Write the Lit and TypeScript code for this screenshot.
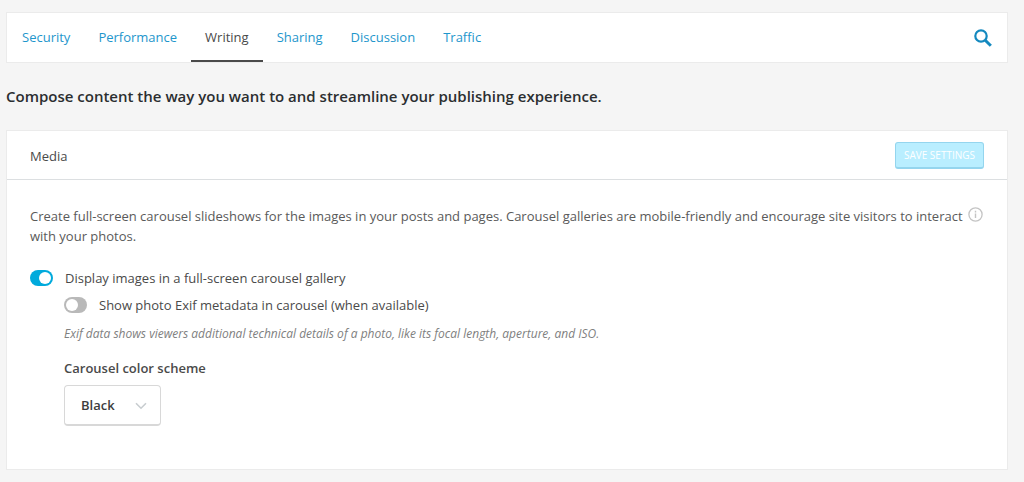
import { LitElement, html, css } from "lit";
import { customElement, state } from "lit/decorators.js";

const TABS = ["Security", "Performance", "Writing", "Sharing", "Discussion", "Traffic"];

@customElement("app-root")
export class AppRoot extends LitElement {
  @state() private active = "Writing";
  @state() private carousel = true;
  @state() private exif = false;

  static styles = css`
    :host {
      display: block;
      box-sizing: border-box;
      min-height: 100vh;
      padding: 12px 16px 12px 6px;
      background: #f5f5f5;
      color: #4a4a4a;
      font: 13px/20px "Open Sans", "Noto Sans", sans-serif;
    }
    *, *::before {
      box-sizing: border-box;
    }
    .nav, .card {
      background: #fff;
      border: 1px solid #ebebeb;
    }
    .nav {
      display: flex;
      align-items: stretch;
      height: 51px;
      padding: 0 15px 0 1px;
    }
    .tabs {
      display: flex;
      flex: 1;
    }
    .tab {
      display: flex;
      align-items: center;
      padding: 0 14px;
      border-bottom: 2px solid transparent;
      color: #1e96cc;
      text-decoration: none;
    }
    .tab.active {
      color: #4a4a4a;
      border-bottom-color: #4a4a4a;
    }
    .search {
      align-self: center;
      display: flex;
      padding: 0;
      border: 0;
      background: none;
      cursor: pointer;
    }
    .title {
      margin: 22px 0 23px;
      color: #2b2e30;
      font-size: 15px;
      line-height: 22px;
      font-weight: 600;
    }
    .card-head {
      display: flex;
      align-items: center;
      justify-content: space-between;
      height: 49px;
      padding: 0 23px;
      border-bottom: 1px solid #dcdfe1;
    }
    .card-title {
      margin: 0;
      padding-top: 2px;
      font-size: 13px;
      font-weight: 400;
    }
    .save {
      height: 27px;
      padding: 0 8px;
      border: 1px solid #94d5ee;
      border-bottom-width: 2px;
      border-radius: 3px;
      background: #b9eeff;
      color: #fff;
      font: 10px/20px "Open Sans", "Noto Sans", sans-serif;
      text-transform: uppercase;
    }
    .card-body {
      padding: 26px 23px 43px;
    }
    .intro {
      display: flex;
      align-items: flex-start;
      justify-content: space-between;
      margin-bottom: 22px;
    }
    .text {
      margin: 0;
      color: #5a5a5a;
    }
    .info {
      display: flex;
      flex: none;
      padding: 1px 1px 0 0;
      border: 0;
      background: none;
    }
    .row {
      display: flex;
      align-items: center;
      gap: 12px;
      height: 20px;
    }
    .toggle {
      appearance: none;
      flex: none;
      display: flex;
      width: 23px;
      height: 16px;
      margin: 0;
      padding: 2px;
      border-radius: 8px;
      background: #b9b9b9;
    }
    .toggle::before {
      content: "";
      width: 12px;
      height: 12px;
      border-radius: 50%;
      background: #fff;
    }
    .toggle:checked {
      justify-content: flex-end;
      background: #00aadc;
    }
    .nested {
      display: flex;
      flex-direction: column;
      align-items: flex-start;
      padding: 7px 0 0 34px;
    }
    .hint {
      margin: 9px 0 14px;
      color: #808080;
      font-size: 12px;
      font-style: italic;
    }
    .label {
      margin-bottom: 7px;
      font-weight: 600;
    }
    .picker {
      display: grid;
      align-items: center;
    }
    .picker > * {
      grid-area: 1 / 1;
    }
    .select {
      appearance: none;
      width: 97px;
      height: 41px;
      padding: 0 40px 0 16px;
      border: 1px solid #d8d8d8;
      border-bottom-width: 2px;
      border-radius: 4px;
      background: #fff;
      color: #3d3d3d;
      font: 600 13px/20px "Open Sans", "Noto Sans", sans-serif;
    }
    .chevron {
      justify-self: end;
      margin-right: 14px;
      pointer-events: none;
    }
  `;

  render() {
    return html`
      <nav class="nav">
        <div class="tabs">
          ${TABS.map(
            (t) => html`<a
              class="tab ${t === this.active ? "active" : ""}"
              href="#${t.toLowerCase()}"
              @click=${() => (this.active = t)}
              >${t}</a
            >`
          )}
        </div>
        <button class="search" aria-label="Search">
          <svg width="18" height="18" viewBox="0 0 18 18" fill="none" stroke="#1489bf">
            <circle cx="7" cy="7" r="5.7" stroke-width="2.2" />
            <path d="M11 11l5.8 5.8" stroke-width="3" />
          </svg>
        </button>
      </nav>
      <h1 class="title">Compose content the way you want to and streamline your publishing experience.</h1>
      <section class="card">
        <header class="card-head">
          <h2 class="card-title">Media</h2>
          <button class="save" disabled>Save settings</button>
        </header>
        <div class="card-body">
          <div class="intro">
            <p class="text">
              Create full-screen carousel slideshows for the images in your posts and pages. Carousel galleries are
              mobile-friendly and encourage site visitors to interact with your photos.
            </p>
            <button class="info" aria-label="Learn more">
              <svg width="15" height="15" viewBox="0 0 15 15" fill="none" stroke="#c4c4c4">
                <circle cx="7.5" cy="7.5" r="6.6" stroke-width="1.3" />
                <path d="M7.5 6.5v4.6M7.5 3.8v1.6" stroke-width="1.4" />
              </svg>
            </button>
          </div>
          <div class="row">
            <input
              class="toggle"
              type="checkbox"
              id="carousel"
              .checked=${this.carousel}
              @change=${() => (this.carousel = !this.carousel)}
            />
            <label for="carousel">Display images in a full-screen carousel gallery</label>
          </div>
          <div class="nested">
            <div class="row">
              <input
                class="toggle"
                type="checkbox"
                id="exif"
                .checked=${this.exif}
                @change=${() => (this.exif = !this.exif)}
              />
              <label for="exif">Show photo Exif metadata in carousel (when available)</label>
            </div>
            <p class="hint">
              Exif data shows viewers additional technical details of a photo, like its focal length, aperture, and ISO.
            </p>
            <label class="label" for="scheme">Carousel color scheme</label>
            <div class="picker">
              <select class="select" id="scheme">
                <option>Black</option>
                <option>White</option>
              </select>
              <svg class="chevron" width="12" height="8" viewBox="0 0 12 8" fill="none" stroke="#c8cdd0">
                <path d="M1 1.2l5 5 5-5" stroke-width="1.6" />
              </svg>
            </div>
          </div>
        </div>
      </section>
    `;
  }
}
